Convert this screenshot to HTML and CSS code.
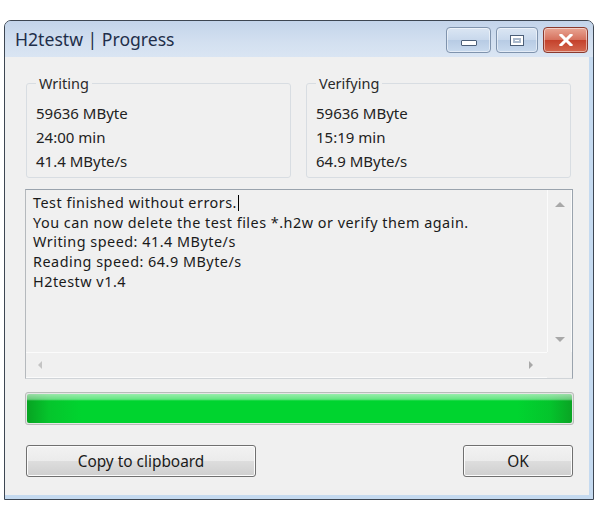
FILE: index.html
```html
<!DOCTYPE html>
<html lang="en">
  <head>
    <meta charset="UTF-8" />
    <meta name="viewport" content="width=device-width, initial-scale=1.0" />
    <title>H2testw | Progress</title>
    <link rel="stylesheet" href="styles.css">
  </head>
  <body>
    <div class="window">
      <div class="titlebar">
        <span class="title">H2testw | Progress</span>
        <div class="controls">
          <div class="ctrl ctrl-min"><span class="glyph-min"></span></div>
          <div class="ctrl ctrl-max"><span class="glyph-max"></span></div>
          <div class="ctrl ctrl-close">
            <svg width="16" height="12" viewBox="0 0 16 12">
              <path d="M3 1 L13 11 M13 1 L3 11" stroke="#fff" stroke-width="3" stroke-linecap="square" />
            </svg>
          </div>
        </div>
      </div>

      <div class="client">
        <div class="groups">
          <fieldset class="group">
            <legend>Writing</legend>
            <div class="stat">59636 MByte</div>
            <div class="stat">24:00 min</div>
            <div class="stat">41.4 MByte/s</div>
          </fieldset>
          <fieldset class="group">
            <legend>Verifying</legend>
            <div class="stat">59636 MByte</div>
            <div class="stat">15:19 min</div>
            <div class="stat">64.9 MByte/s</div>
          </fieldset>
        </div>

        <div class="log">
          <div class="log-main">
            <div class="log-text">
              <div>Test finished without errors.<span class="caret"></span></div>
              <div>You can now delete the test files *.h2w or verify them again.</div>
              <div>Writing speed: 41.4 MByte/s</div>
              <div>Reading speed: 64.9 MByte/s</div>
              <div>H2testw v1.4</div>
            </div>
            <div class="vscroll">
              <span class="arrow arrow-up"></span>
              <span class="arrow arrow-down"></span>
            </div>
          </div>
          <div class="log-bottom">
            <div class="hscroll">
              <span class="arrow arrow-left"></span>
              <span class="arrow arrow-right"></span>
            </div>
            <div class="corner"></div>
          </div>
        </div>

        <div class="progress">
          <div class="progress-fill"></div>
        </div>

        <div class="button-row">
          <button class="btn btn-copy">Copy to clipboard</button>
          <button class="btn btn-ok">OK</button>
        </div>
      </div>
    </div>
  </body>
</html>
```

FILE: styles.css
```css
:root {
  --frame-dark: #3d4652;
  --frame-blue: #c5daf0;
  --face: #f0f0f0;
  --text: #1c1c1c;
  --group-border: #d8dde2;
  --arrow: #a8a8a8;
}

* {
  box-sizing: border-box;
  margin: 0;
  padding: 0;
}

body {
  font-family: "Noto Sans", "Open Sans", sans-serif;
  background: #fff;
  color: var(--text);
}

.window {
  margin: 20px 0 0 4px;
  width: 590px;
  height: 480px;
  border: 1px solid var(--frame-dark);
  border-radius: 7px 7px 0 0;
  display: flex;
  flex-direction: column;
  overflow: hidden;
  background: var(--frame-blue);
}

/* title bar */

.titlebar {
  height: 36px;
  flex: none;
  display: flex;
  align-items: center;
  justify-content: space-between;
  padding: 0 5px 0 10px;
  background: linear-gradient(#c3d4ea, #d3e0f0 60%, #dae5f3);
}

.title {
  font-size: 17.6px;
  color: #1f2f4a;
}

.controls {
  display: flex;
  gap: 5px;
  align-self: flex-start;
  margin-top: 6px;
}

.ctrl {
  height: 26px;
  width: 45px;
  border: 1px solid #7f93ad;
  border-radius: 4px;
  display: flex;
  align-items: center;
  justify-content: center;
  background: linear-gradient(#dbe6f3, #c8d8ec 50%, #b7cbe4 51%, #c9daee);
  box-shadow: inset 0 0 0 1px rgba(255, 255, 255, 0.5);
}

.ctrl-max {
  width: 42px;
}

.ctrl-close {
  border-color: #8a3a2e;
  background: linear-gradient(#e9a593, #d5705c 50%, #c4412b 51%, #d4684f);
}

.glyph-min {
  width: 16px;
  height: 6px;
  margin-top: 6px;
  border: 1px solid #4c5f78;
  background: #fff;
  border-radius: 1px;
}

.glyph-max {
  width: 14px;
  height: 11px;
  border: 1px solid #4c5f78;
  background: #fff;
  box-shadow: inset 0 0 0 2px #fff, inset 0 0 0 4px #aab9cc;
}

/* client area */

.client {
  flex: 1;
  background: var(--face);
  margin: 0 4px 4px 0;
  padding: 18px 0 0 21px;
  display: flex;
  flex-direction: column;
}

.groups {
  display: flex;
  gap: 15px;
  width: 545px;
}

.group {
  flex: 1;
  height: 103px;
  border: 1px solid var(--group-border);
  border-radius: 3px;
  padding: 10px 9px 0 9px;
}

.group legend {
  font-size: 14.5px;
  padding: 0 3px;
  line-height: 16px;
  color: #2a2a2a;
}

.stat {
  font-size: 15px;
  line-height: 24px;
  color: #222;
}

/* log box */

.log {
  margin-top: 11px;
  margin-left: -1px;
  width: 548px;
  height: 190px;
  border: 1px solid #9aa3ad;
  border-left-color: #b5b9bd;
  border-bottom-color: #d0d4d8;
  background: var(--face);
  display: flex;
  flex-direction: column;
}

.log-main {
  flex: 1;
  display: flex;
  min-height: 0;
}

.log-text {
  flex: 1;
  padding: 3px 0 0 7px;
  font-size: 14.4px;
  letter-spacing: 0.5px;
  line-height: 19.7px;
  color: #1a1a1a;
}

.caret {
  display: inline-block;
  width: 1px;
  height: 16px;
  background: #000;
  vertical-align: -3px;
  margin-left: 1px;
}

.vscroll {
  width: 25px;
  flex: none;
  border-left: 1px solid #fbfbfb;
  border-right: 1px solid #fbfbfb;
  display: flex;
  flex-direction: column;
  justify-content: space-between;
  align-items: center;
  padding: 12px 0 10px;
}

.log-bottom {
  height: 26px;
  flex: none;
  display: flex;
}

.hscroll {
  flex: 1;
  border-top: 1px solid #fbfbfb;
  border-bottom: 1px solid #fbfbfb;
  display: flex;
  justify-content: space-between;
  align-items: center;
  padding: 0 14px 0 12px;
}

.corner {
  width: 25px;
}

.arrow {
  width: 0;
  height: 0;
  border: 5px solid transparent;
}

.arrow-up {
  border-bottom-color: var(--arrow);
  border-top-width: 0;
}

.arrow-down {
  border-top-color: var(--arrow);
  border-bottom-width: 0;
}

.arrow-left {
  border-right-color: #c4c4c4;
  border-width: 4px 4px 4px 0;
}

.arrow-right {
  border-left-color: var(--arrow);
  border-width: 4px 0 4px 4px;
}

/* progress bar */

.progress {
  margin-top: 13px;
  margin-left: -1px;
  width: 549px;
  height: 33px;
  border: 1px solid #b8bcb8;
  border-radius: 3px;
  padding: 1px;
  background: #e6e6e6;
}

.progress-fill {
  height: 100%;
  border-radius: 2px;
  background:
    linear-gradient(rgba(255, 255, 255, 0.6), rgba(255, 255, 255, 0.4) 18%, rgba(255, 255, 255, 0) 24%),
    linear-gradient(90deg, #07a322, #05c52c 4%, #00d42f 10%, #00d42f 90%, #04c42c 96%, #0aa424);
}

/* buttons */

.button-row {
  display: flex;
  justify-content: space-between;
  width: 547px;
  margin-top: 20px;
}

.btn {
  height: 32px;
  font-family: inherit;
  font-size: 15.4px;
  color: #1a1a1a;
  border: 1px solid #707070;
  border-radius: 3px;
  background: linear-gradient(#f2f2f2, #ebebeb 50%, #dddddd 51%, #cfcfcf);
  box-shadow: inset 0 0 0 1px #fcfcfc;
}

.btn-copy {
  width: 230px;
}

.btn-ok {
  width: 110px;
}
```
